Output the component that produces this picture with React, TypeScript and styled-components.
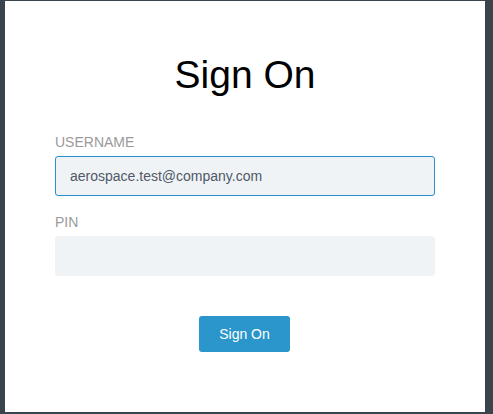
import React, { useState } from 'react';
import styled, { createGlobalStyle } from 'styled-components';

const GlobalStyle = createGlobalStyle`
	html, body {
		margin: 0;
		padding: 0;
		background: #3b434c;
		font-family: "Liberation Sans", Arial, sans-serif;
	}
`;

const Card = styled.div`
	box-sizing: border-box;
	width: 480px;
	height: 411px;
	margin: 1px 0 0 5px;
	padding: 52px 50px 0;
	background: #fff;
	display: flex;
	flex-direction: column;
`;

const Title = styled.h1`
	margin: 0 0 37px;
	font-size: 39px;
	line-height: 44px;
	font-weight: 400;
	color: #000;
	text-align: center;
`;

const Field = styled.div<{ $gap: number }>`
	display: flex;
	flex-direction: column;
	margin-bottom: ${p => p.$gap}px;
`;

const Label = styled.label`
	font-size: 14px;
	line-height: 16px;
	color: #9a9a9a;
	margin-bottom: 6px;
`;

const Input = styled.input<{ $focused?: boolean }>`
	box-sizing: border-box;
	width: 380px;
	height: 40px;
	padding: 0 14px;
	font-family: "Liberation Sans", Arial, sans-serif;
	font-size: 14px;
	color: #4f5966;
	background: #eff3f6;
	border: 1px solid ${p => (p.$focused ? '#2f8fce' : '#eff3f6')};
	border-radius: 3px;
	outline: none;
`;

const Actions = styled.div`
	display: flex;
	justify-content: center;
	padding-top: 22px;
`;

const Button = styled.button`
	width: 91px;
	height: 36px;
	margin-right: 1px;
	border: none;
	border-radius: 3px;
	background: #2b96cc;
	color: #fff;
	font-family: "Liberation Sans", Arial, sans-serif;
	font-size: 14px;
	cursor: pointer;
`;

const App = () => {
	const [username, setUsername] = useState('aerospace.test@company.com');
	const [pin, setPin] = useState('');

	return (
		<>
			<GlobalStyle />
			<Card>
				<Title>Sign On</Title>
				<Field $gap={18}>
					<Label>USERNAME</Label>
					<Input $focused value={username} onChange={e => setUsername(e.target.value)} />
				</Field>
				<Field $gap={18}>
					<Label>PIN</Label>
					<Input type="password" value={pin} onChange={e => setPin(e.target.value)} />
				</Field>
				<Actions>
					<Button>Sign On</Button>
				</Actions>
			</Card>
		</>
	);
};

export default App;
